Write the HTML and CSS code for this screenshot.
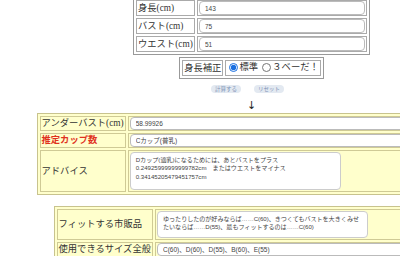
FILE: index.html
```html
<!DOCTYPE html>
<html lang="ja">
<head>
  <meta charset="utf-8">
  <link rel="stylesheet" href="styles.css">
</head>
<body>
  <div class="page">
    <table class="form">
      <tr>
        <td class="label">身長(cm)</td>
        <td><input type="text" class="field" value="143"></td>
      </tr>
      <tr>
        <td class="label">バスト(cm)</td>
        <td><input type="text" class="field" value="75"></td>
      </tr>
      <tr>
        <td class="label">ウエスト(cm)</td>
        <td><input type="text" class="field" value="51"></td>
      </tr>
    </table>

    <table class="adjust">
      <tr>
        <td>身長補正</td>
        <td>
          <label><input type="radio" name="hosei" checked>標準</label>
          <label><input type="radio" name="hosei">３ベーだ！</label>
        </td>
      </tr>
    </table>

    <div class="buttons">
      <button>計算する</button>
      <button>リセット</button>
    </div>

    <div class="arrow">↓</div>

    <table class="result">
      <tr>
        <td class="label">アンダーバスト(cm)</td>
        <td><input type="text" class="field" value="58.99926"></td>
      </tr>
      <tr>
        <td class="label cup">推定カップ数</td>
        <td><input type="text" class="field" value="Cカップ(普乳)"></td>
      </tr>
      <tr>
        <td class="label">アドバイス</td>
        <td><textarea class="note advice">Dカップ(適乳)になるためには、あとバストをプラス
0.24925999999999782cm　またはウエストをマイナス
0.34145205479451757cm</textarea></td>
      </tr>
    </table>

    <table class="result shop">
      <tr>
        <td class="label">フィットする市販品</td>
        <td><textarea class="note fit">ゆったりしたのが好みならば……C(60)、きつくてもバストを大きくみせたいならば……D(55)、最もフィットするのは……C(60)</textarea></td>
      </tr>
      <tr>
        <td class="label">使用できるサイズ全般</td>
        <td><input type="text" class="field" value="C(60)、D(60)、D(55)、B(60)、E(55)"></td>
      </tr>
    </table>
  </div>
</body>
</html>
```

FILE: styles.css
```css
html {
  overflow: hidden;
}

body {
  margin: 0;
  font-family: "Liberation Serif", "Noto Sans CJK JP", serif;
  color: #333;
}

.page {
  width: 503px;
}

table {
  border-collapse: separate;
  margin: 0 auto;
}

td {
  font-size: 9.3px;
  line-height: 12px;
  white-space: nowrap;
  padding: 0 1px;
}

.field {
  display: block;
  box-sizing: border-box;
  width: 100%;
  height: 14px;
  margin: 0;
  padding: 0 5px;
  border: 1px solid #bbb;
  border-radius: 4px;
  background: #fff;
  font: 6.5px "Liberation Sans", "Noto Sans CJK JP", sans-serif;
  color: #444;
}

/* input form */
.form {
  width: 237px;
  margin-top: -3px;
  border: 1px solid #999;
  border-spacing: 2px;
}

.form td {
  border: 1px solid #aaa;
  height: 14px;
  padding: 0 1px;
}

.form .label {
  width: 55px;
}

.adjust {
  width: 138px;
  margin-top: 2px;
  border: 1px solid #999;
  border-spacing: 2px;
}

.adjust td {
  border: 1px solid #aaa;
  height: 13px;
  padding: 0 1px;
}

.adjust label {
  display: inline-flex;
  align-items: center;
}

.adjust input {
  width: 9px;
  height: 9px;
  margin: 0 1px 0 2px;
  accent-color: #1a6fe0;
}

.buttons {
  display: flex;
  justify-content: center;
  gap: 13px;
  margin-top: 6px;
  padding-right: 8px;
}

.buttons button {
  height: 8px;
  padding: 0 4px;
  border: none;
  border-radius: 4px;
  background: #e3e9f1;
  color: #7d92b5;
  font: 5.5px "Noto Sans CJK JP", sans-serif;
  line-height: 8px;
}

.arrow {
  margin-top: 7px;
  text-align: center;
  font: 11px/11px "DejaVu Sans", sans-serif;
  color: #222;
}

/* result tables */
.result {
  width: 430px;
  margin-top: 2px;
  background: #ffffcc;
  border: 1px solid #c8c38e;
  border-spacing: 2px;
}

.result td {
  background: #ffffcc;
  border: 1px solid #cfca95;
  padding: 0 1px;
}

.result .label {
  width: 82px;
}

.result .field {
  height: 13px;
}

.cup {
  color: #e0321e;
  font-weight: bold;
}

.note {
  display: block;
  box-sizing: border-box;
  width: 211px;
  margin: 1px 0;
  padding: 3px 4px 3px 5px;
  border: 1px solid #ccc;
  border-radius: 4px;
  background: #fff;
  resize: none;
  overflow: hidden;
  font: 6.1px/8.5px "Liberation Sans", "Noto Sans CJK JP", sans-serif;
  color: #444;
  white-space: pre-wrap;
}

.advice {
  height: 38px;
}

.shop {
  width: 396px;
  margin-top: 11px;
}

.shop .label {
  width: 92px;
}

.fit {
  height: 27px;
  letter-spacing: -0.05px;
}
```
